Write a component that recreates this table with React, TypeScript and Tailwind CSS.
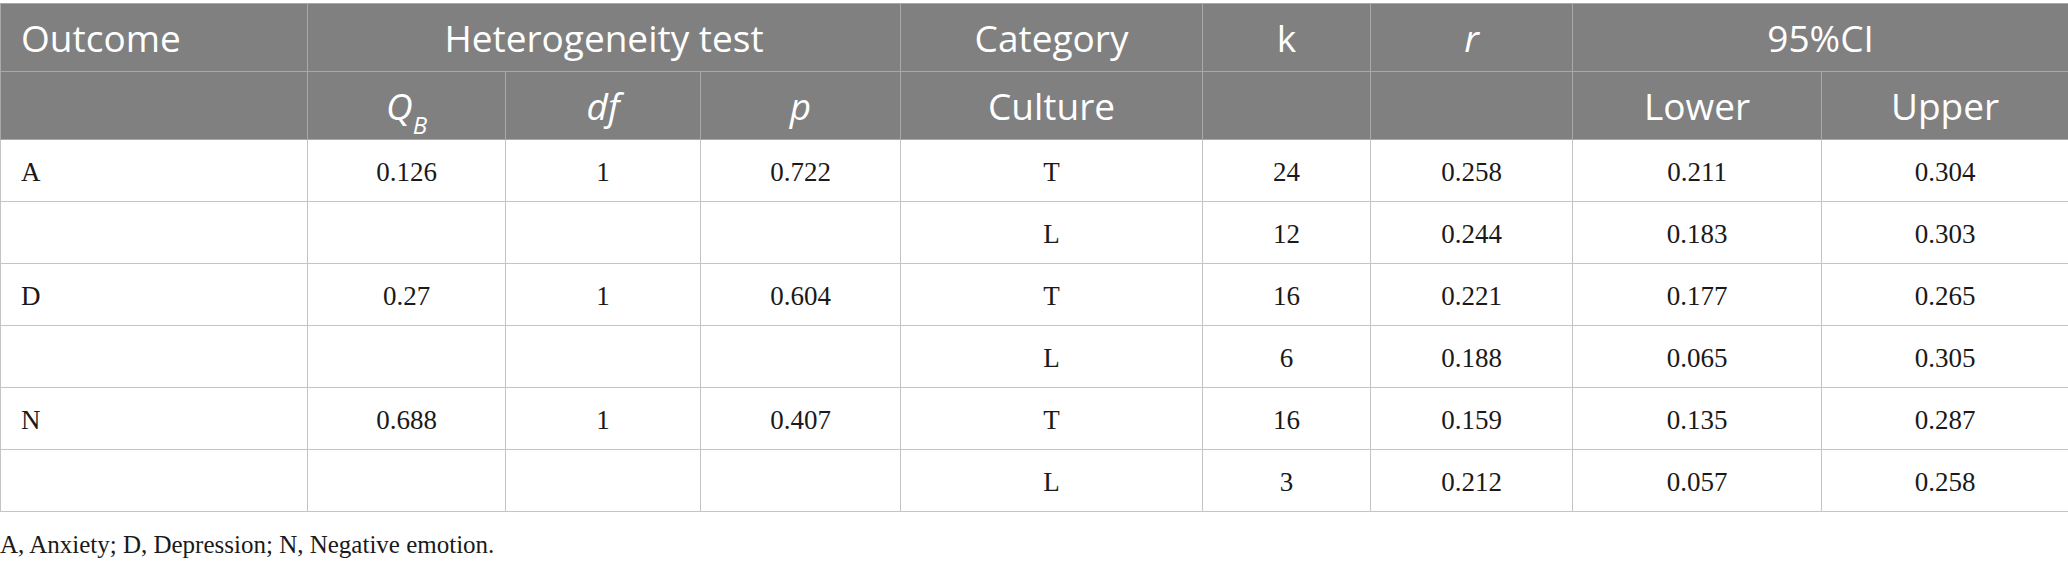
import React from 'react';

interface Row {
  outcome: string;
  qb: string;
  df: string;
  p: string;
  culture: string;
  k: string;
  r: string;
  lower: string;
  upper: string;
}

const ROWS: Row[] = [
  { outcome: 'A', qb: '0.126', df: '1', p: '0.722', culture: 'T', k: '24', r: '0.258', lower: '0.211', upper: '0.304' },
  { outcome: '', qb: '', df: '', p: '', culture: 'L', k: '12', r: '0.244', lower: '0.183', upper: '0.303' },
  { outcome: 'D', qb: '0.27', df: '1', p: '0.604', culture: 'T', k: '16', r: '0.221', lower: '0.177', upper: '0.265' },
  { outcome: '', qb: '', df: '', p: '', culture: 'L', k: '6', r: '0.188', lower: '0.065', upper: '0.305' },
  { outcome: 'N', qb: '0.688', df: '1', p: '0.407', culture: 'T', k: '16', r: '0.159', lower: '0.135', upper: '0.287' },
  { outcome: '', qb: '', df: '', p: '', culture: 'L', k: '3', r: '0.212', lower: '0.057', upper: '0.258' },
];

const COLS = [307, 198, 195, 200, 302, 168, 202, 249, 247];

const th = 'border border-[#a9a9a9] font-normal text-white h-[68px] px-5 text-center';
const td = 'border border-[#c4c4c4] h-[62px] px-5 pt-[3px] text-center';

export default function App() {
  return (
    <div className="w-[2068px] h-[562px] bg-white pt-[3px]">
      <table className="table-fixed border-collapse w-[2068px]">
        <colgroup>
          {COLS.map((w, i) => (
            <col key={i} style={{ width: w }} />
          ))}
        </colgroup>
        <thead className="bg-[#808080] text-[37px] font-['Open_Sans',sans-serif] leading-none">
          <tr>
            <th className={`${th} text-left`}>Outcome</th>
            <th className={th} colSpan={3}>Heterogeneity test</th>
            <th className={th}>Category</th>
            <th className={th}>k</th>
            <th className={`${th} italic`}>r</th>
            <th className={th} colSpan={2}>95%CI</th>
          </tr>
          <tr>
            <th className={th}></th>
            <th className={`${th} italic`}>
              Q<sub className="text-[24px] align-[-0.35em]">B</sub>
            </th>
            <th className={`${th} italic`}>df</th>
            <th className={`${th} italic`}>p</th>
            <th className={th}>Culture</th>
            <th className={th}></th>
            <th className={th}></th>
            <th className={th}>Lower</th>
            <th className={th}>Upper</th>
          </tr>
        </thead>
        <tbody className="text-[27px] leading-none text-[#1a1a1a] font-['Liberation_Serif',serif]">
          {ROWS.map((row, i) => (
            <tr key={i}>
              <td className={`${td} text-left`}>{row.outcome}</td>
              <td className={td}>{row.qb}</td>
              <td className={td}>{row.df}</td>
              <td className={td}>{row.p}</td>
              <td className={td}>{row.culture}</td>
              <td className={td}>{row.k}</td>
              <td className={td}>{row.r}</td>
              <td className={td}>{row.lower}</td>
              <td className={td}>{row.upper}</td>
            </tr>
          ))}
        </tbody>
      </table>
      <p className="mt-[14px] text-[25px] text-[#1a1a1a] font-['Liberation_Serif',serif]">
        A, Anxiety; D, Depression; N, Negative emotion.
      </p>
    </div>
  );
}
